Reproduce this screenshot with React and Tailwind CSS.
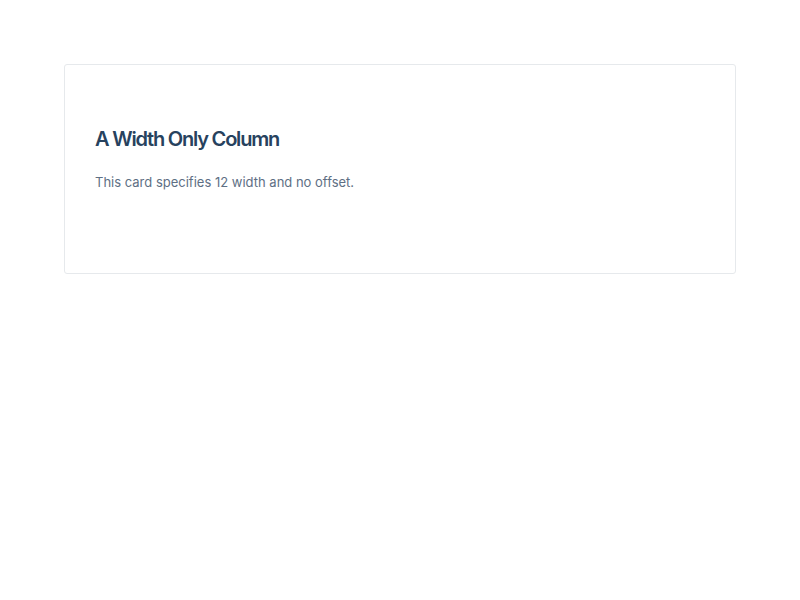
export default function App() {
  return (
    <div className="min-h-screen bg-white p-16" style={{ fontFamily: 'Inter, "Noto Sans", sans-serif' }}>
      <div className="rounded-[3px] border border-[#e6e9ec] px-[30px] pt-[60px] pb-[81px]">
        <h1 className="text-[20px] leading-[28px] font-semibold tracking-[-1.2px] text-[#27425e]">
          A Width Only Column
        </h1>
        <p className="mt-[19px] text-[13px] leading-[20px] text-[#5e6f84]">
          This card specifies 12 width and no offset.
        </p>
      </div>
    </div>
  );
}
